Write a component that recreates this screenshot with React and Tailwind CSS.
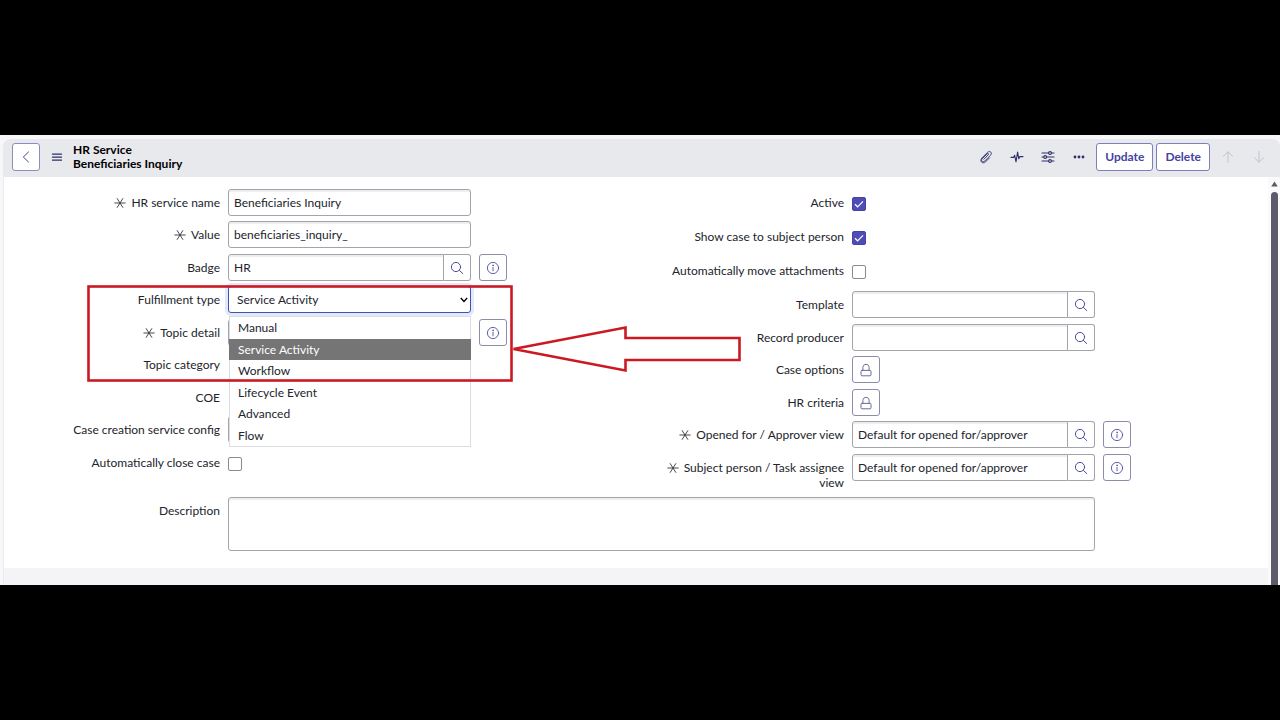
import React from "react";

function Svg({ size = "size-[14px]", box = 14, width = 1, className = "", children }) {
  return (
    <svg
      aria-hidden="true"
      viewBox={`0 0 ${box} ${box}`}
      className={`${size} shrink-0 ${className}`}
      fill="none"
      stroke="currentColor"
      strokeWidth={width}
      strokeLinecap="round"
      strokeLinejoin="round"
    >
      {children}
    </svg>
  );
}

const ChevronLeftIcon = () => (
  <Svg className="text-[#4a4a80]">
    <path d="M9.5 2 L4.3 7 L9.5 12" />
  </Svg>
);

const MenuIcon = () => (
  <Svg width={1.3} size="size-3" box={12} className="text-[#2f2e6b]">
    <path d="M1.5 3.2 H10.5 M1.5 6.2 H10.5 M1.5 9.2 H10.5" />
  </Svg>
);

const ClipIcon = () => (
  <Svg width={0.9}>
    <path d="M4.9 9.2 L9.2 4.9 C10.2 3.9 9.1 2.9 8.2 3.8 L3.3 8.7 C1.5 10.6 3.6 13 5.7 11.1 L11.4 5.4 C13.8 2.8 10.9 0.1 8.5 2.4 L2.9 8 C0.2 11 3.4 14.6 6.6 11.8 L10.5 7.9" />
  </Svg>
);

const PulseIcon = () => (
  <Svg width={1.1}>
    <path d="M1 7.4 H3.6 L4.6 5.2 L6 11.8 L7.6 2 L8.8 8.8 L9.8 6.6 H13" />
  </Svg>
);

const SlidersIcon = () => (
  <Svg width={1.1}>
    <path d="M1 3 H7.6 M10.4 3 H13 M1 7 H2.8 M5.6 7 H13 M1 11 H7.6 M10.4 11 H13" />
    <circle cx="9" cy="3" r="1.4" />
    <circle cx="4.2" cy="7" r="1.4" />
    <circle cx="9" cy="11" r="1.4" />
  </Svg>
);

const DotsIcon = () => (
  <Svg>
    <g fill="currentColor" stroke="none">
      <circle cx="3" cy="7" r="1.4" />
      <circle cx="7" cy="7" r="1.4" />
      <circle cx="11" cy="7" r="1.4" />
    </g>
  </Svg>
);

const ArrowUpIcon = () => (
  <Svg>
    <path d="M7 12.5 V2 M2.4 6.4 L7 1.8 L11.6 6.4" />
  </Svg>
);

const ArrowDownIcon = () => (
  <Svg>
    <path d="M7 1.5 V12 M2.4 7.6 L7 12.2 L11.6 7.6" />
  </Svg>
);

const SearchIcon = () => (
  <Svg>
    <circle cx="6" cy="6" r="4.6" />
    <path d="M9.4 9.4 L12.8 12.6" />
  </Svg>
);

const InfoIcon = () => (
  <Svg width={0.9}>
    <circle cx="7" cy="7" r="5.6" />
    <path d="M7 6.2 V9.8" />
    <circle cx="7" cy="4.3" r="0.35" />
  </Svg>
);

const LockIcon = () => (
  <Svg className="text-[#6b6a9c]">
    <path d="M3.9 7.4 V4.6 C3.9 0.2 10.1 0.2 10.1 4.6 V7.4" />
    <rect x="2" y="7.4" width="10" height="5.4" rx="1" />
  </Svg>
);

const RequiredMark = () => (
  <Svg size="size-3" box={12} width={0.9} className="mr-[5px] inline-block align-[-2px] text-[#333]">
    <path d="M0.8 6 H11.2 M3.2 1.6 L8.8 10.4 M8.8 1.6 L3.2 10.4" />
  </Svg>
);

const inputBorder = "border border-[#a3a3aa] shadow-[inset_0_2px_1px_#eeeef0]";
const gap = "odd:mb-[5px] even:mb-1.5";

function Row({ id, label, required, info, className = gap, children }) {
  return (
    <div
      className={`grid grid-cols-[minmax(0,216fr)_minmax(0,243fr)_minmax(0,149fr)] gap-x-2 ${className}`}
    >
      <label htmlFor={id} className="pt-1.5 pl-6 text-right leading-[15px]">
        {required && <RequiredMark />}
        {label}
      </label>
      <div className="relative flex h-[27px] items-center">{children}</div>
      {info && (
        <div>
          <SquareButton label={`About ${label}`}>
            <InfoIcon />
          </SquareButton>
        </div>
      )}
    </div>
  );
}

function SquareButton({ id, label, children }) {
  return (
    <button
      id={id}
      type="button"
      aria-label={label}
      className="flex h-[27px] w-7 items-center justify-center rounded-[3px] border border-[#8d8cab] bg-white text-[#504fa0]"
    >
      {children}
    </button>
  );
}

function TextField({ id, value }) {
  return (
    <input
      id={id}
      type="text"
      defaultValue={value}
      className={`h-full w-full min-w-0 rounded-[3px] bg-white px-[5px] pb-px ${inputBorder}`}
    />
  );
}

function LookupField({ id, value, label }) {
  return (
    <>
      <input
        id={id}
        type="text"
        defaultValue={value}
        className={`h-full min-w-0 flex-1 rounded-l-[3px] bg-white px-[5px] pb-px ${inputBorder}`}
      />
      <button
        type="button"
        aria-label={`Look up ${label}`}
        className="flex h-full w-[27px] items-center justify-center rounded-r-[3px] border border-l-0 border-[#a3a3aa] bg-white text-[#4e4d9c]"
      >
        <SearchIcon />
      </button>
    </>
  );
}

function Checkbox({ id, checked }) {
  return (
    <span className="relative mt-0.5 flex size-[14px]">
      <input
        id={id}
        type="checkbox"
        defaultChecked={checked}
        className="peer size-full appearance-none rounded-[2px] border border-[#8a8a94] bg-white checked:border-[#4544a5] checked:bg-[#4f4db5]"
      />
      <svg
        aria-hidden="true"
        viewBox="0 0 14 14"
        className="pointer-events-none absolute inset-0 hidden text-white peer-checked:block"
        fill="none"
        stroke="currentColor"
        strokeWidth="1.2"
      >
        <path d="M3 7.3 L5.6 9.8 L11 4.4" />
      </svg>
    </span>
  );
}

const options = ["Manual", "Service Activity", "Workflow", "Lifecycle Event", "Advanced", "Flow"];

function FulfillmentSelect({ id }) {
  const [value, setValue] = React.useState("Service Activity");
  return (
    <>
      <select
        id={id}
        value={value}
        onChange={(e) => setValue(e.target.value)}
        className="h-full w-full appearance-none rounded-[3px] border border-[#3f51b5] bg-white px-2 pt-px shadow-[0_0_0_3px_#e3e9fa]"
      >
        {options.map((o) => (
          <option key={o}>{o}</option>
        ))}
      </select>
      <svg
        aria-hidden="true"
        viewBox="0 0 8 6"
        className="pointer-events-none absolute right-[3px] h-1.5 w-2 text-black"
        fill="none"
        stroke="currentColor"
        strokeWidth="1.4"
      >
        <path d="M0.8 1 L4 4.4 L7.2 1" />
      </svg>
      <ul
        role="listbox"
        aria-label="Fulfillment type options"
        className="absolute top-[30px] right-0 left-px z-10 border border-[#dcdce2] bg-white"
      >
        {options.map((o) => (
          <li
            key={o}
            role="option"
            aria-selected={o === value}
            onClick={() => setValue(o)}
            className="-mr-px -ml-px pl-[9px] leading-[21px] odd:h-[22px] even:h-[21px] aria-selected:bg-[#757575] aria-selected:text-white"
          >
            {o}
          </li>
        ))}
      </ul>
    </>
  );
}

function ReadOnlyField({ id }) {
  return <input id={id} type="text" readOnly className="h-full w-full min-w-0 px-[5px]" />;
}

function ToolButton({ label, children, disabled }) {
  return (
    <button
      type="button"
      aria-label={label}
      disabled={disabled}
      className="flex h-7 w-[31px] items-center justify-center text-[#2f2e6b] disabled:text-[#c3c3cc]"
    >
      {children}
    </button>
  );
}

function ActionButton({ children, className }) {
  return (
    <button
      type="button"
      className={`h-7 rounded-[3px] border border-[#7f7ebd] bg-white px-2 font-bold text-[#4443a0] ${className}`}
    >
      {children}
    </button>
  );
}

function Header() {
  return (
    <header className="flex h-[38px] items-center rounded-t-lg bg-[#e8e9ed] pr-1.5 pb-0.5 pl-[9px]">
      <button
        type="button"
        aria-label="Back"
        className="flex size-7 items-center justify-center rounded-[3px] border border-[#8d8cc0] bg-white"
      >
        <ChevronLeftIcon />
      </button>
      <button type="button" aria-label="Menu" className="flex h-7 w-[33px] items-center justify-center">
        <MenuIcon />
      </button>
      <h1 className="leading-[14px] font-bold text-black">
        HR Service
        <br />
        Beneficiaries Inquiry
      </h1>
      <div className="ml-auto flex items-center">
        <ToolButton label="Attachments">
          <ClipIcon />
        </ToolButton>
        <ToolButton label="Activity">
          <PulseIcon />
        </ToolButton>
        <ToolButton label="Personalize form">
          <SlidersIcon />
        </ToolButton>
        <ToolButton label="More options">
          <DotsIcon />
        </ToolButton>
        <ActionButton className="ml-0.5">Update</ActionButton>
        <ActionButton className="ml-[3px]">Delete</ActionButton>
        <span className="w-0.5" />
        <ToolButton label="Previous record" disabled>
          <ArrowUpIcon />
        </ToolButton>
        <ToolButton label="Next record" disabled>
          <ArrowDownIcon />
        </ToolButton>
      </div>
    </header>
  );
}

function Callout() {
  return (
    <svg
      aria-hidden="true"
      viewBox="0 0 656 100"
      className="pointer-events-none absolute top-[107px] left-[82px] z-20 h-[100px] w-[656px]"
      fill="none"
      stroke="#cb1822"
      strokeWidth="2.6"
    >
      <rect x="2.5" y="2.5" width="423" height="94" />
      <path d="M427.5 65 L539.5 43.5 V54 H653.5 V76 H539.5 V86.5 Z" />
    </svg>
  );
}

function Form() {
  return (
    <form className="relative bg-white pt-3 pr-4 pb-[17px]">
      <div className="grid grid-cols-2">
        <div>
          <Row id="name" label="HR service name" required>
            <TextField id="name" value="Beneficiaries Inquiry" />
          </Row>
          <Row id="value" label="Value" required>
            <TextField id="value" value="beneficiaries_inquiry_" />
          </Row>
          <Row id="badge" label="Badge" info>
            <LookupField id="badge" value="HR" label="Badge" />
          </Row>
          <Row id="fulfillment" label="Fulfillment type">
            <FulfillmentSelect id="fulfillment" />
          </Row>
          <Row id="topic-detail" label="Topic detail" required info>
            <TextField id="topic-detail" />
          </Row>
          <Row id="topic-category" label="Topic category">
            <ReadOnlyField id="topic-category" />
          </Row>
          <Row id="coe" label="COE">
            <ReadOnlyField id="coe" />
          </Row>
          <Row id="config" label="Case creation service config">
            <TextField id="config" />
          </Row>
          <Row id="auto-close" label="Automatically close case">
            <Checkbox id="auto-close" />
          </Row>
        </div>
        <div>
          <Row id="active" label="Active" className="mb-[7px]">
            <Checkbox id="active" checked />
          </Row>
          <Row id="show-case" label="Show case to subject person" className="mb-[7px]">
            <Checkbox id="show-case" checked />
          </Row>
          <Row id="move-attachments" label="Automatically move attachments" className="mb-[7px]">
            <Checkbox id="move-attachments" />
          </Row>
          <Row id="template" label="Template">
            <LookupField id="template" label="Template" />
          </Row>
          <Row id="producer" label="Record producer">
            <LookupField id="producer" label="Record producer" />
          </Row>
          <Row id="case-options" label="Case options">
            <SquareButton id="case-options" label="Unlock Case options">
              <LockIcon />
            </SquareButton>
          </Row>
          <Row id="criteria" label="HR criteria">
            <SquareButton id="criteria" label="Unlock HR criteria">
              <LockIcon />
            </SquareButton>
          </Row>
          <Row id="opened-for" label="Opened for / Approver view" required info>
            <LookupField
              id="opened-for"
              value="Default for opened for/approver"
              label="Opened for / Approver view"
            />
          </Row>
          <Row
            id="subject-person"
            label="Subject person / Task assignee view"
            required
            info
            className="mb-[7px]"
          >
            <LookupField
              id="subject-person"
              value="Default for opened for/approver"
              label="Subject person / Task assignee view"
            />
          </Row>
        </div>
      </div>
      <div className="grid grid-cols-[minmax(0,216fr)_minmax(0,867fr)_minmax(0,149fr)] gap-x-2">
        <label htmlFor="description" className="pt-1.5 text-right leading-[15px]">
          Description
        </label>
        <textarea
          id="description"
          rows={2}
          className={`block h-[54px] w-full resize-none rounded-[3px] bg-white px-[5px] py-1 ${inputBorder}`}
        />
      </div>
      <Callout />
    </form>
  );
}

function ScrollBar() {
  return (
    <div aria-hidden="true" className="flex w-3 flex-col items-center bg-[#fafafb] pt-1">
      <svg viewBox="0 0 7 6" className="mb-[5px] h-1.5 w-[7px]" fill="#5c5b6c">
        <path d="M3.5 0.5 L6.8 5.5 H0.2 Z" />
      </svg>
      <div className="w-[7px] flex-1 rounded-t bg-[#5c5b6c]" />
    </div>
  );
}

export default function App() {
  return (
    <div className="flex min-h-screen flex-col justify-center bg-black font-['Lato',sans-serif] text-xs text-[#22242c]">
      <main className="bg-[#f7f7f9] pt-1 pl-[3px]">
        <Header />
        <div className="flex">
          <div className="flex-1 border-l border-[#ececf0] bg-[#f4f4f6] pb-[17px]">
            <Form />
          </div>
          <ScrollBar />
        </div>
      </main>
    </div>
  );
}
